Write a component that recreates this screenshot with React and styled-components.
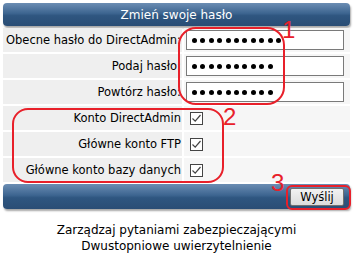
import styled, { createGlobalStyle } from 'styled-components';

const GlobalStyle = createGlobalStyle`
  body {
    margin: 0;
    background: #ffffff;
    font-family: "DejaVu Sans", Verdana, sans-serif;
    font-size: 11.5px;
    color: #000;
  }
`;

const Page = styled.div`
  position: relative;
  width: 353px;
  height: 263px;
  padding: 3px 3px 0 3px;
  box-sizing: border-box;
`;

const Bar = styled.div`
  height: ${({tall}) => (tall ? 25 : 23)}px;
  border-radius: 4px;
  background: linear-gradient(#6b8db3, #3d6590 45%, #2f5680 55%, #2a4d75);
  box-shadow: 1px 2px 2px rgba(0, 0, 0, 0.35);
  color: #fff;
  display: flex;
  align-items: center;
  justify-content: ${({end}) => (end ? 'flex-end' : 'center')};
  padding: 0 4px;
  font-size: 12px;
  margin-bottom: 2px;
`;

const Grid = styled.div`
  display: grid;
  grid-template-columns: 179px 1fr;
  row-gap: 2px;
  column-gap: 2px;
  margin-bottom: 2px;
`;

const Label = styled.div`
  background: #efefef;
  height: 24px;
  display: flex;
  align-items: center;
  justify-content: flex-end;
  padding-right: 1px;
  white-space: nowrap;
`;

const Cell = styled.div`
  background: #f6f6f6;
  height: 24px;
  display: flex;
  align-items: center;
  padding-left: 2px;
`;

const Input = styled.div`
  width: 158px;
  height: 20px;
  box-sizing: border-box;
  border: 1px solid #7a7a7a;
  background: #fff;
  display: flex;
  align-items: center;
  gap: 3.4px;
  padding-left: 5px;
`;

const Dot = styled.span`
  width: 5px;
  height: 5px;
  border-radius: 50%;
  background: #000;
`;

const Check = styled.span`
  width: 13px;
  height: 13px;
  box-sizing: border-box;
  border: 1px solid #444;
  background: #fff;
  margin-left: 4px;
  display: flex;
  align-items: center;
  justify-content: center;
`;

const Button = styled.button`
  font-family: "DejaVu Sans", Verdana, sans-serif;
  font-size: 11.5px;
  width: 54px;
  height: 18px;
  padding: 0;
  border: 1px solid #707070;
  border-radius: 2px;
  background: linear-gradient(#f2f2f2, #dcdcdc);
  color: #000;
  margin-right: 2px;
`;

const Links = styled.div`
  margin-top: 13px;
  text-align: center;
  font-size: 12px;
  line-height: 16px;
`;

const Mark = styled.div`
  position: absolute;
  border: 2px solid #e8202a;
  border-radius: ${({r}) => r}px;
`;

const Num = styled.div`
  position: absolute;
  color: #e8202a;
  font-family: "Liberation Sans", Arial, sans-serif;
  font-size: 24px;
  line-height: 1;
`;

const Tick = () => (
  <svg width="11" height="11" viewBox="0 0 11 11">
    <path d="M1.5 5.5 L4.2 8.2 L9.5 2" fill="none" stroke="#444" strokeWidth="1.2" />
  </svg>
);

const passwords = [
  ['Obecne hasło do DirectAdmin:', 11],
  ['Podaj hasło:', 10],
  ['Powtórz hasło:', 10],
];

const accounts = ['Konto DirectAdmin', 'Główne konto FTP', 'Główne konto bazy danych'];

export default function App() {
  return (
    <Page>
      <GlobalStyle />
      <Bar>Zmień swoje hasło</Bar>
      <Grid>
        {passwords.map(([label, n]) => (
          <>
            <Label key={label}>{label}</Label>
            <Cell key={label + 'v'}>
              <Input>
                {Array.from({length: n}, (_, i) => (
                  <Dot key={i} />
                ))}
              </Input>
            </Cell>
          </>
        ))}
        {accounts.map((label) => (
          <>
            <Label key={label}>{label}</Label>
            <Cell key={label + 'v'}>
              <Check>
                <Tick />
              </Check>
            </Cell>
          </>
        ))}
      </Grid>
      <Bar tall end>
        <Button>Wyślij</Button>
      </Bar>
      <Links>
        <div>Zarządzaj pytaniami zabezpieczającymi</div>
        <div>Dwustopniowe uwierzytelnienie</div>
      </Links>

      <Mark r={18} style={{left: 178, top: 27, width: 103, height: 74}} />
      <Num style={{left: 282, top: 18}}>1</Num>
      <Mark r={16} style={{left: 12, top: 108, width: 208, height: 71}} />
      <Num style={{left: 223, top: 105}}>2</Num>
      <Mark r={6} style={{left: 286, top: 185, width: 61, height: 21}} />
      <Num style={{left: 271, top: 171}}>3</Num>
    </Page>
  );
}
